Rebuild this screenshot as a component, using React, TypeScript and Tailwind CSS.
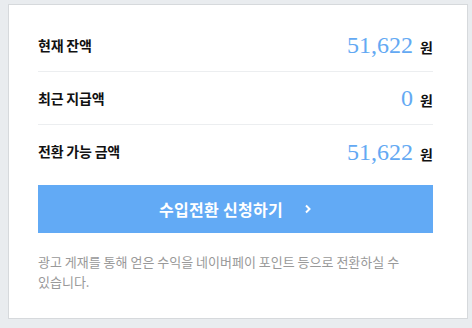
import React from 'react';

const rows = [
  { label: '현재 잔액', value: '51,622' },
  { label: '최근 지급액', value: '0' },
  { label: '전환 가능 금액', value: '51,622' },
];

export default function App() {
  return (
    <div
      className="h-[328px] w-[472px] overflow-hidden bg-[#e9ecef] pl-2 pt-1"
      style={{ fontFamily: '"Noto Sans CJK KR", "Noto Sans", sans-serif' }}
    >
      <div className="h-[315px] w-[460px] border border-[#d6d9dc] bg-white pb-[26px] pl-[29px] pr-[34px] pt-[14px]">
        {rows.map((row, i) => (
          <div
            key={i}
            className={`flex h-[53px] items-center justify-between ${
              i < rows.length - 1 ? 'border-b border-[#eceef0]' : ''
            }`}
          >
            <span className="text-[14px] font-bold tracking-[-0.2px] text-[#111]">{row.label}</span>
            <span className="flex items-baseline">
              <span
                className="text-[24px] leading-none text-[#63a9f3]"
                style={{ fontFamily: '"Liberation Serif", serif' }}
              >
                {row.value}
              </span>
              <span className="ml-[7px] text-[14px] font-bold leading-none text-[#111]">원</span>
            </span>
          </div>
        ))}

        <button className="mt-[7px] flex h-[48px] w-full items-center justify-center gap-[21px] bg-[#62aaf5] text-[16px] font-bold text-white">
          <span className="tracking-[0.3px]">수입전환 신청하기</span>
          <svg width="8" height="10" viewBox="0 0 8 10" fill="none">
            <path d="M2 1.5 L5.5 5 L2 8.5" stroke="white" strokeWidth="2" />
          </svg>
        </button>

        <p className="mt-[19px] break-keep text-[13px] leading-[20px] text-[#999]">
          광고 게재를 통해 얻은 수익을 네이버페이 포인트 등으로 전환하실 수 있습니다.
        </p>
      </div>
    </div>
  );
}
